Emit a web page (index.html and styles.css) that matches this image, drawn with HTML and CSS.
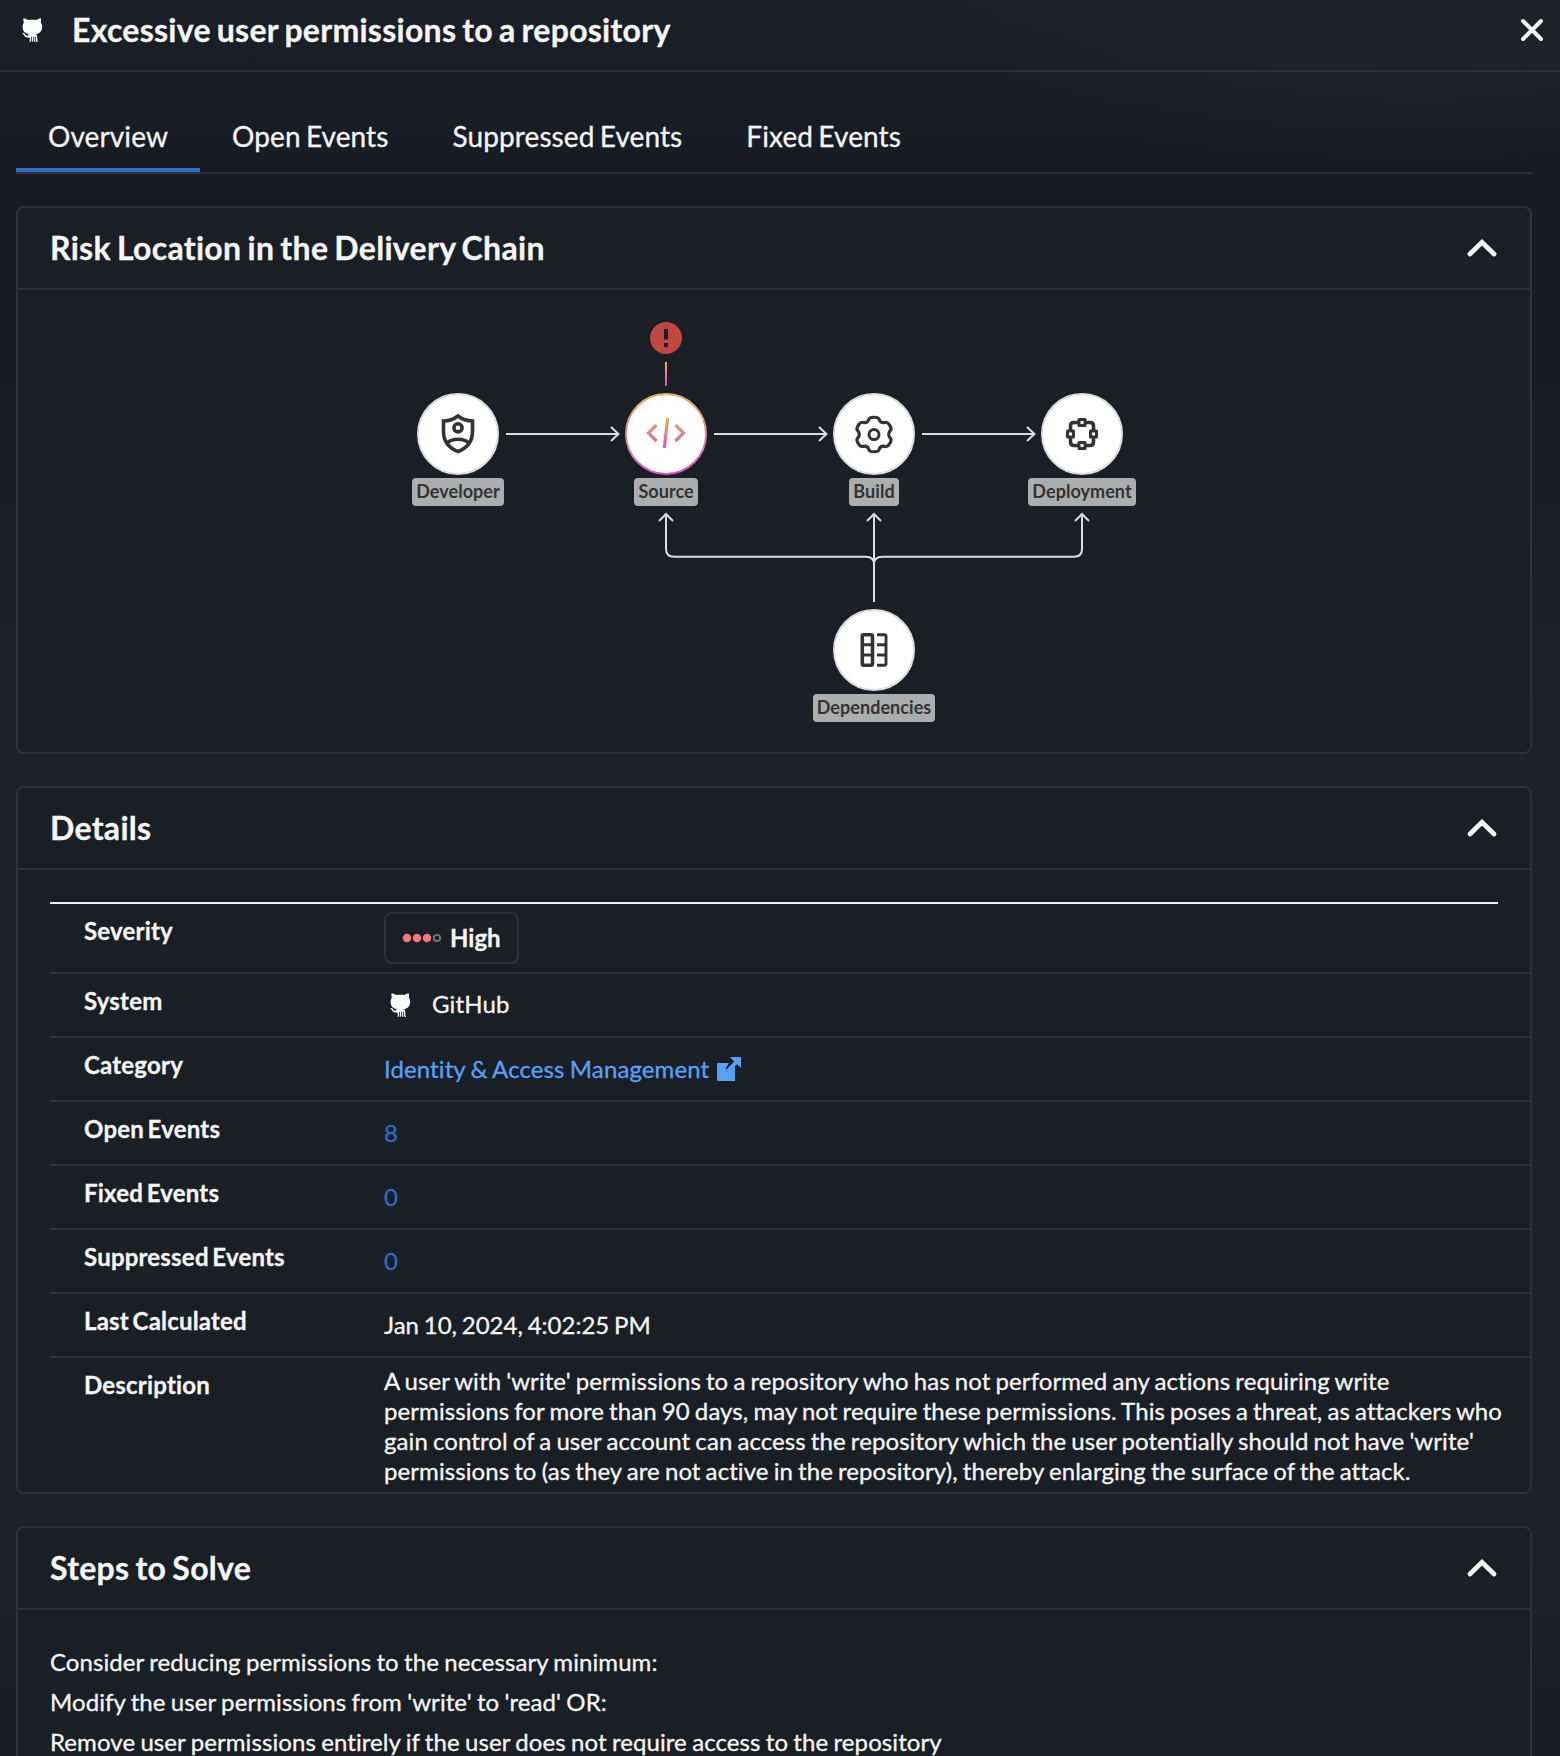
FILE: index.html
```html
<!DOCTYPE html>
<html lang="en">
<head>
<meta charset="utf-8">
<title>Excessive user permissions to a repository</title>
<link rel="stylesheet" href="styles.css">
</head>
<body>
<svg class="sprite" aria-hidden="true">
  <symbol id="octocat" viewBox="0 0 21 24">
    <path d="M1.6.2C3 .3 4.500 1 5.800 2c2.800-.5 6-.5 8.800 0C15.900 1 17.400.3 18.800.2c.4 1.600.4 2.800 0 4.200 1.200 1.600 1.600 3.500 1.300 5.600-.5 3.700-2.700 5.700-6.100 6.300 1 .7 1.300 1.600 1.300 2.700v3.200c0 .8.4 1.200.9 1.800-1.500 0-2.300-.5-2.300-1.600v-3.600h-.8v3.900c0 .7.200 1 .5 1.400-1.300-.1-1.700-.6-1.700-1.500v-3.800h-.8v3.900c0 .9-.5 1.300-1.700 1.400.4-.5.500-.8.500-1.500v-3.800h-.8v3.500c0 1.200-.8 1.700-2.200 1.700.5-.5.900-1 .9-1.800v-2.400C4.100 19.900 2.900 19 2 17.300 1.600 16.400 1 15.800.2 15.200c1.300-.3 2.300.3 3 1.200.8 1.100 1.700 1.500 2.900 1.200.1-.5.300-.9.800-1.300C3.400 15.800 1 13.700.7 10 .5 7.900.8 6 1.900 4.400 1.300 3 1.300 1.800 1.600.2Z"/>
  </symbol>
  <symbol id="chevron-up" viewBox="0 0 32 20">
    <path d="M4 16 16 4.300 28 16" fill="none" stroke="currentColor" stroke-width="4.800" stroke-linecap="round"/>
  </symbol>
</svg>

<header class="topbar">
  <svg class="octocat"><use href="#octocat"/></svg>
  <h1 class="topbar-title">Excessive user permissions to a repository</h1>
  <button class="close" aria-label="Close">
    <svg width="24" height="24" viewBox="0 0 24 24"><path d="M3 3 21 21M21 3 3 21" stroke="currentColor" stroke-width="4" stroke-linecap="round"/></svg>
  </button>
</header>

<main class="content">
  <nav class="tabs">
    <a class="tab active">Overview</a>
    <a class="tab">Open Events</a>
    <a class="tab">Suppressed Events</a>
    <a class="tab">Fixed Events</a>
  </nav>

  <section class="card">
    <div class="card-head">
      <h2 class="card-title">Risk Location in the Delivery Chain</h2>
      <svg class="chevron"><use href="#chevron-up"/></svg>
    </div>
    <div class="diagram">
      <svg class="edges" width="1512" height="462" viewBox="18 290 1512 462">
        <defs>
          <linearGradient id="stem" gradientUnits="userSpaceOnUse" x1="0" y1="362" x2="0" y2="386"><stop offset="0" stop-color="#dfb25c"/><stop offset="1" stop-color="#d956c4"/></linearGradient>
        </defs>
        <g fill="none" stroke="#dcdddd" stroke-width="2">
          <path d="M506 434H618M611 427l7.500 7-7.500 7"/>
          <path d="M714 434H826M819 427l7.500 7-7.500 7"/>
          <path d="M922 434h112M1027 427l7.500 7-7.500 7"/>
          <path d="M874 602V514M867 521l7-7 7 7"/>
          <path d="M666 514v35q0 7.700 8 7.700h192q8 0 8 7.700M659 521l7-7 7 7"/>
          <path d="M1082 514v35q0 7.700-8 7.700H882q-8 0-8 7.700M1075 521l7-7 7 7"/>
        </g>
        <rect x="665" y="362" width="2" height="24" fill="url(#stem)"/>
        <circle cx="666" cy="338" r="16" fill="#c24642"/>
        <path d="M664 329h4v10.600h-4zM664 343h4v4h-4z" fill="#1a1e25"/>
      </svg>

      <div class="node developer">
        <svg width="82" height="82" viewBox="-41 -41 82 82">
          <circle class="disc" r="40"/>
          <g class="glyph">
            <path d="M0-18C-4.500-14.500-9-13-14.500-13V-2.500C-14.500 7-9 14-0 17.500 9 14 14.500 7 14.500-2.500V-13C9-13 4.500-14.500 0-18Z"/>
            <circle cy="-6.200" r="4.100"/>
            <path d="M-11 9C-5 4 5 4 11 9"/>
          </g>
        </svg>
        <span class="node-label">Developer</span>
      </div>
      <div class="node source">
        <svg width="82" height="82" viewBox="-41 -41 82 82">
          <defs>
            <linearGradient id="ring" x1="0" y1="0" x2="0" y2="1"><stop offset="0" stop-color="#dfb45a"/><stop offset=".5" stop-color="#e18b98"/><stop offset="1" stop-color="#d956c4"/></linearGradient>
            <linearGradient id="code" gradientUnits="userSpaceOnUse" x1="0" y1="-16" x2="0" y2="14"><stop offset="0" stop-color="#dfb45a"/><stop offset="1" stop-color="#d956c4"/></linearGradient>
          </defs>
          <circle r="40" fill="#fff" stroke="url(#ring)" stroke-width="2"/>
          <path d="M-9.500-9-17.500-1l8 8M9.500-9l8 8-8 8M1.700-16-1.700 14" fill="none" stroke="url(#code)" stroke-width="3.200"/>
        </svg>
        <span class="node-label">Source</span>
      </div>
      <div class="node build">
        <svg width="82" height="82" viewBox="-41 -41 82 82">
          <circle class="disc" r="40"/>
          <g class="glyph thin">
            <path transform="scale(1.080 1.040)" d="M-5-13.500C-4.500-17 4.500-17 5-13.500 5.800-11.500 7.500-10.600 9.700-11.100 13.200-12.500 17.500-5 14.800-2.900 13.300-1 13.300 1.800 14.800 3.600 17.500 6 13.200 13.300 9.700 11.900 7.500 11.300 5.800 12.300 5 14.300 4.500 18-4.500 18-5 14.300-5.800 12.300-7.500 11.300-9.700 11.900-13.200 13.300-17.500 6-14.800 3.600-13.300 1.800-13.300-1-14.800-2.900-17.500-5-13.200-12.500-9.700-11.100-7.500-10.600-5.800-11.500-5-13.500Z"/>
            <circle cy=".6" r="5"/>
          </g>
        </svg>
        <span class="node-label">Build</span>
      </div>
      <div class="node deployment">
        <svg width="82" height="82" viewBox="-41 -41 82 82">
          <circle class="disc" r="40"/>
          <g class="glyph">
            <path d="M-4-11.500H-8Q-11.500-11.500-11.500-8V-4M4-11.500H8Q11.500-11.500 11.500-8V-4M-4 11.500H-8Q-11.500 11.500-11.500 8V4M4 11.500H8Q11.500 11.500 11.500 8V4"/>
            <path d="M-3-14.500h6v6h-6zM-3 8.500h6v6h-6zM-14.500-3h6v6h-6zM8.500-3h6v6h-6z" stroke-width="3" stroke-linejoin="round"/>
          </g>
        </svg>
        <span class="node-label">Deployment</span>
      </div>
      <div class="node dependencies">
        <svg width="82" height="82" viewBox="-41 -41 82 82">
          <circle class="disc" r="40"/>
          <g class="glyph">
            <rect x="-11.700" y="-15.200" width="10.200" height="30.400" rx="1.500"/>
            <path d="M-11.700-5.200h10.200M-11.700 5h10.200M3-15.200h7.500Q12-15.200 12-13.700V13.700Q12 15.200 10.500 15.200H3M3-5.200h9M3 5h9" stroke-width="2.900"/>
          </g>
        </svg>
        <span class="node-label">Dependencies</span>
      </div>
    </div>
  </section>

  <section class="card">
    <div class="card-head">
      <h2 class="card-title">Details</h2>
      <svg class="chevron"><use href="#chevron-up"/></svg>
    </div>
    <dl class="details">
      <div class="row severity">
        <dt>Severity</dt>
        <dd><span class="badge"><svg width="40" height="10" viewBox="0 0 40 10"><g fill="#ef7b78"><circle cx="5" cy="5" r="4.300"/><circle cx="15" cy="5" r="4.300"/><circle cx="25" cy="5" r="4.300"/></g><circle cx="35" cy="5" r="3.200" fill="none" stroke="#77797c" stroke-width="1.800"/></svg>High</span></dd>
      </div>
      <div class="row"><dt>System</dt><dd class="system"><svg class="octocat"><use href="#octocat"/></svg>GitHub</dd></div>
      <div class="row"><dt>Category</dt><dd><a class="link">Identity &amp; Access Management<svg width="24" height="24" viewBox="0 0 24 24"><path d="M0 6h12L8.500 11.800l2.400 3.400L18 9.500V24H1Q0 24 0 23Z"/><path d="M13 0h11v11l-3.700-3.700-8.800 8L9 13l8.300-8.400Z"/></svg></a></dd></div>
      <div class="row"><dt>Open Events</dt><dd><a class="count">8</a></dd></div>
      <div class="row"><dt>Fixed Events</dt><dd><a class="count">0</a></dd></div>
      <div class="row"><dt>Suppressed Events</dt><dd><a class="count">0</a></dd></div>
      <div class="row"><dt>Last Calculated</dt><dd class="date">Jan 10, 2024, 4:02:25 PM</dd></div>
      <div class="row description"><dt>Description</dt><dd>A user with 'write' permissions to a repository who has not performed any actions requiring write<br>permissions for more than 90 days, may not require these permissions. This poses a threat, as attackers who<br>gain control of a user account can access the repository which the user potentially should not have 'write'<br>permissions to (as they are not active in the repository), thereby enlarging the surface of the attack.</dd></div>
    </dl>
  </section>

  <section class="card steps-card">
    <div class="card-head">
      <h2 class="card-title">Steps to Solve</h2>
      <svg class="chevron"><use href="#chevron-up"/></svg>
    </div>
    <div class="steps">
      <p>Consider reducing permissions to the necessary minimum:</p>
      <p>Modify the user permissions from 'write' to 'read' OR:</p>
      <p>Remove user permissions entirely if the user does not require access to the repository</p>
    </div>
  </section>
</main>
</body>
</html>
```

FILE: styles.css
```css
* { box-sizing: border-box; }

:root {
  --line: #2d3138;
  --text: #f5f5f5;
  --card: #1a1e25;
}

body {
  margin: 0;
  height: 1756px;
  overflow: hidden;
  font: 24px/30px Lato, sans-serif;
  font-variant-ligatures: none;
  -webkit-text-stroke: .3px;
  color: var(--text);
  background:
    radial-gradient(ellipse 500px 170px at 1420px 0, #1f232a, transparent),
    linear-gradient(#1b1f27 0, #181b23 170px, #181b22 330px, #1e2129 740px, #1e2129 1540px, #191c23 1756px);
}

h1, h2, p, dl, dd { margin: 0; }

.sprite { position: absolute; width: 0; height: 0; }

.topbar {
  display: flex;
  align-items: center;
  height: 72px;
  padding: 0 16px 10px 22px;
  border-bottom: 2px solid var(--line);
}

.octocat { flex: none; width: 21px; height: 24px; fill: #fff; }

.topbar-title {
  flex: 1;
  margin-left: 29px;
  font-size: 32px;
  line-height: 40px;
  font-weight: 700;
  letter-spacing: .27px;
  word-spacing: -2px;
}

.close {
  display: flex;
  padding: 0;
  border: 0;
  background: none;
  color: var(--text);
}

.content { padding: 32px 28px 0 16px; }

.tabs {
  display: flex;
  height: 70px;
  margin-bottom: 32px;
  border-bottom: 2px solid var(--line);
}

.tab {
  height: 68px;
  padding: 15px 32px 0;
  font-size: 28px;
  line-height: 34px;
  letter-spacing: .1px;
  word-spacing: -2px;
}

.tab.active {
  width: 184px;
  border-bottom: 4px solid #2e6cc5;
}

.card {
  margin-bottom: 32px;
  border: 2px solid var(--line);
  border-radius: 8px;
  background: var(--card);
}

.card-head {
  display: flex;
  align-items: center;
  justify-content: space-between;
  height: 82px;
  padding: 0 32px;
  border-bottom: 2px solid var(--line);
}

.card-title {
  font-size: 32px;
  line-height: 40px;
  font-weight: 700;
  letter-spacing: .3px;
  word-spacing: -2px;
}

.chevron { width: 32px; height: 20px; color: var(--text); }

.diagram { position: relative; height: 462px; }
.edges { display: block; }

/* Every node is centred on its own point of the canvas. */
.node {
  position: absolute;
  display: flex;
  flex-direction: column;
  align-items: center;
  width: 140px;
}

.developer { left: 370px; top: 103px; }
.source { left: 578px; top: 103px; }
.build { left: 786px; top: 103px; }
.deployment { left: 994px; top: 103px; }
.dependencies { left: 786px; top: 319px; }

.disc { fill: #fff; stroke: #dcdddf; stroke-width: 2; }
.glyph { fill: none; stroke: #333; stroke-width: 3.6; }
.glyph.thin { stroke-width: 3; }

.node-label {
  height: 28px;
  margin-top: 3px;
  padding: 0 4px;
  border-radius: 4px;
  background: #acadaf;
  color: #333;
  font-size: 18px;
  line-height: 27px;
  font-weight: 700;
  letter-spacing: .05px;
  -webkit-text-stroke: 0;
}

.details {
  margin: 32px 0 0 32px;
}

.row {
  display: flex;
  height: 64px;
  padding-left: 34px;
  border-bottom: 2px solid var(--line);
}

.row dt {
  width: 300px;
  padding-top: 12px;
  line-height: 29px;
  font-weight: 700;
  letter-spacing: .2px;
  word-spacing: -2.400px;
}

.row dd { padding-top: 16px; }

.row.severity {
  position: relative;
  height: 72px;
}

.row.severity::before {
  content: "";
  position: absolute;
  left: 0;
  top: 0;
  width: 1448px;
  height: 2px;
  background: #f0f0f0;
}

.severity dt { padding-top: 14px; }
.severity dd { padding-top: 10px; }

.badge {
  display: flex;
  align-items: center;
  gap: 8px;
  width: 135px;
  height: 52px;
  padding-left: 16px;
  border: 2px solid var(--line);
  border-radius: 8px;
  font-weight: 700;
}

.row .system {
  display: flex;
  gap: 21px;
  padding: 15px 0 0 6px;
  letter-spacing: .15px;
}
.system .octocat { margin-top: 4px; }

.link { display: flex; gap: 8px; color: #58a1f8; letter-spacing: .1px; word-spacing: -1px; }
.link svg { fill: #58a1f8; margin-top: 3px; }
.count { color: #2e6cc5; }
.date { word-spacing: -1.400px; }

.row.description { height: 134px; border-bottom: 0; }
.description dd {
  padding-top: 8px;
  white-space: nowrap;
  letter-spacing: .08px;
  word-spacing: -1.150px;
}

/* The last card runs on below the fold. */
.steps-card {
  height: 230px;
  margin-bottom: 0;
  border-bottom: 0;
  border-radius: 8px 8px 0 0;
  overflow: hidden;
}
.steps {
  padding: 32px 32px 0;
  line-height: 40px;
  letter-spacing: .08px;
  word-spacing: -.950px;
}
```
